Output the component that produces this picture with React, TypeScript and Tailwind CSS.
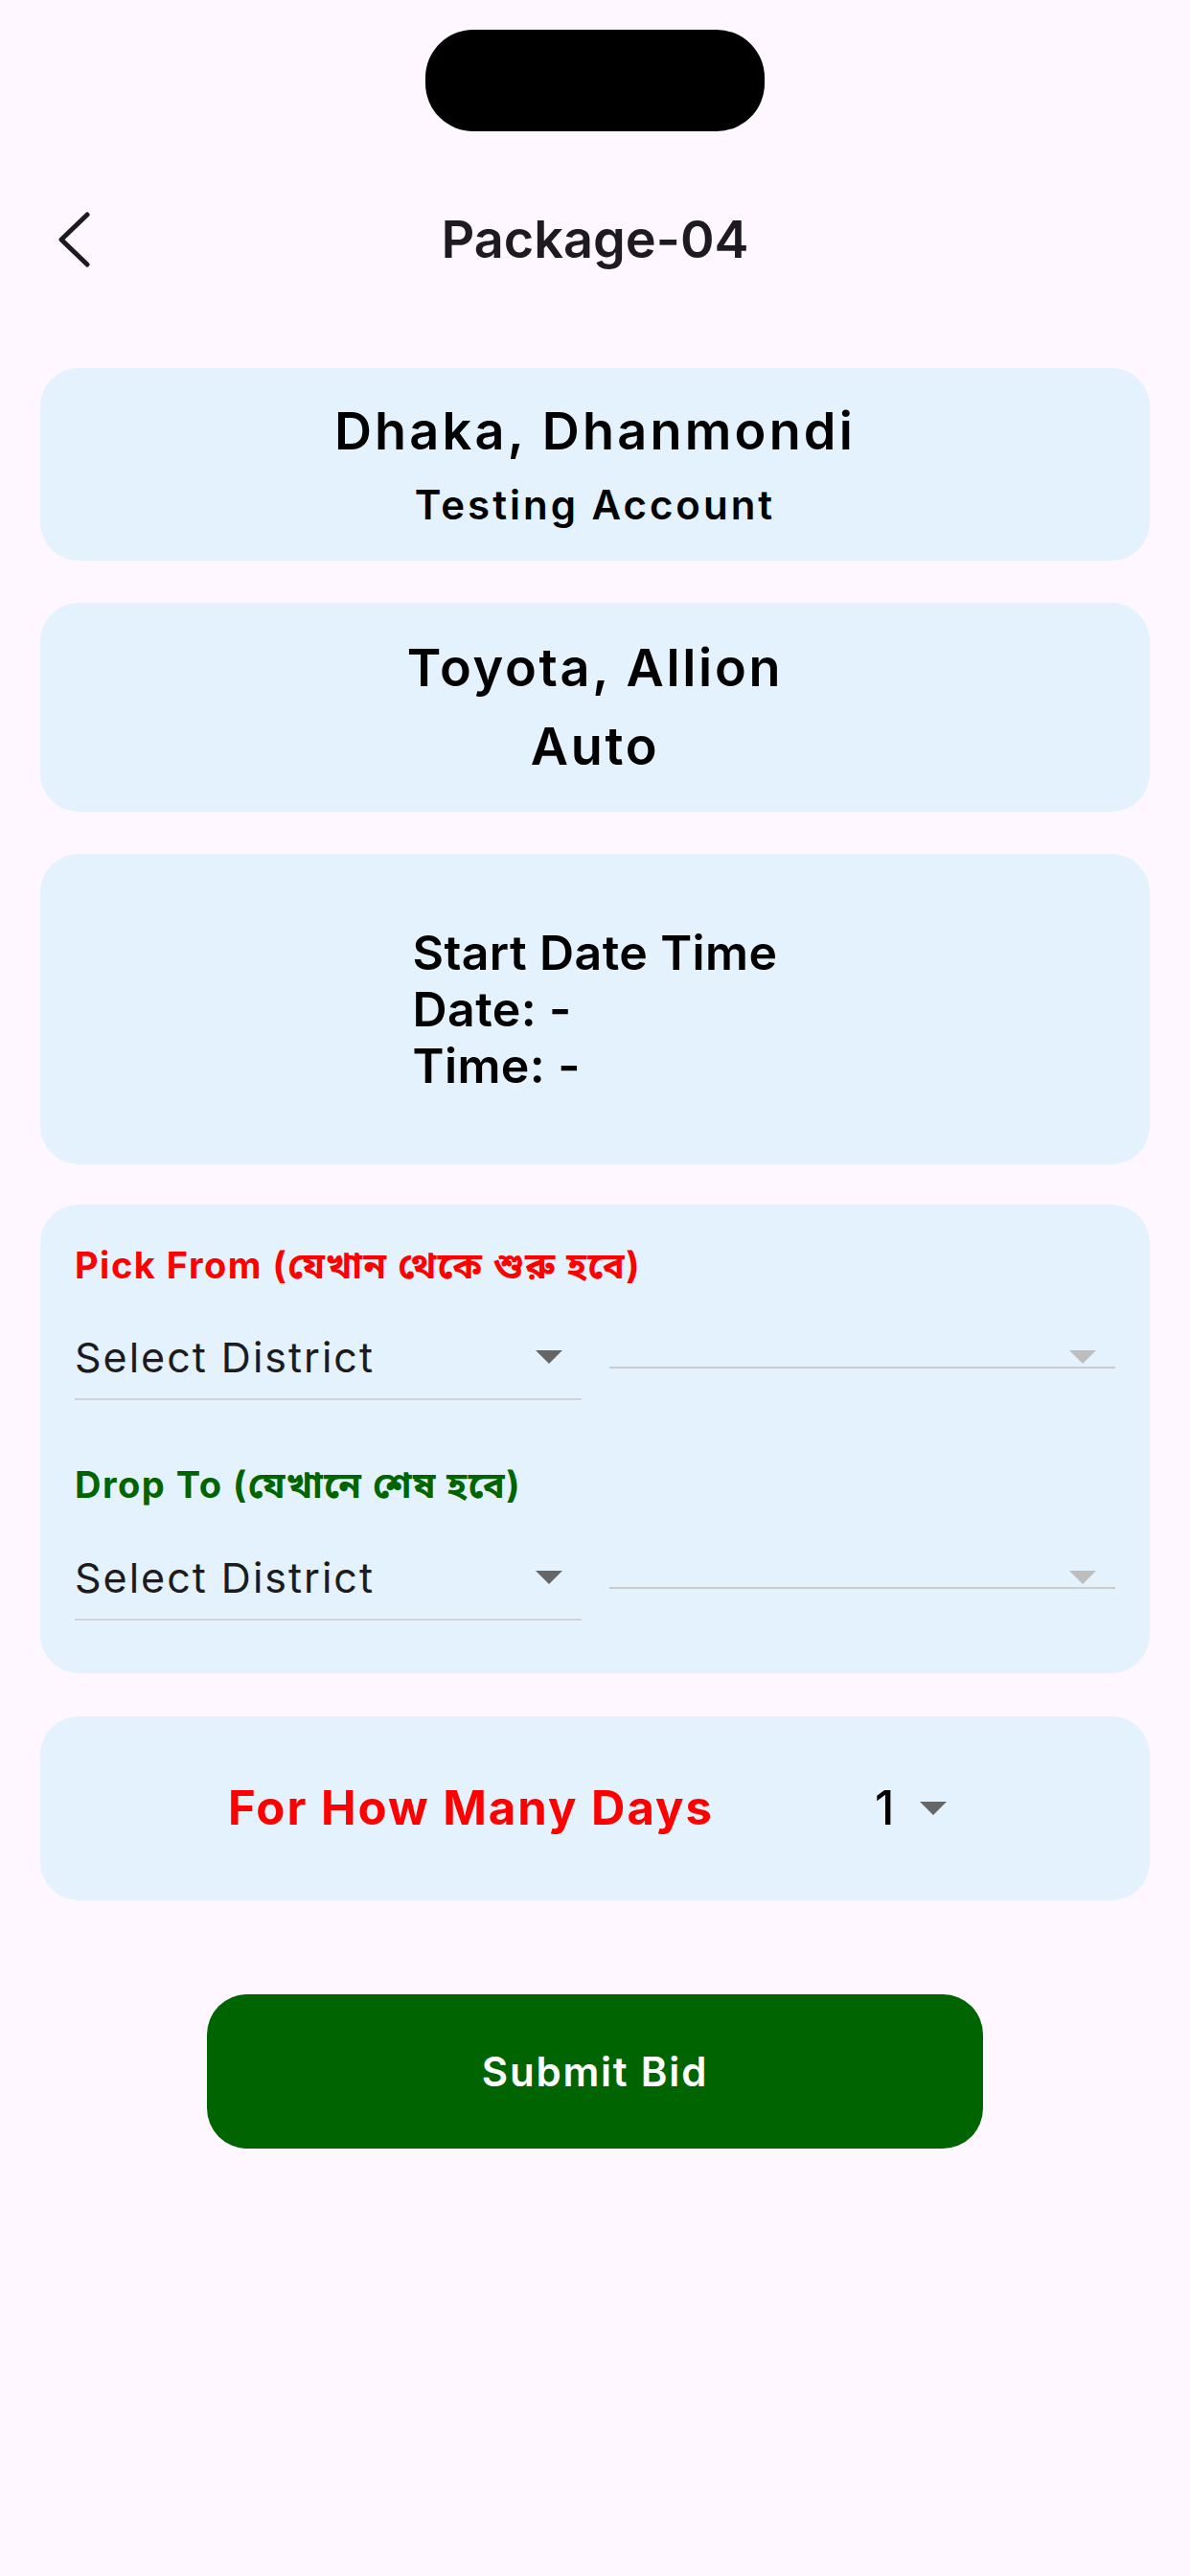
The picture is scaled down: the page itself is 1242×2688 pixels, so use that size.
import { useState } from 'react';

const sans = { fontFamily: 'Inter, "Noto Sans", "Noto Sans Bengali", "Lohit Bengali", FreeSans, sans-serif' };

function Caret({ color }: { color: string }) {
  return (
    <svg width="28" height="14" viewBox="0 0 28 14" className="shrink-0">
      <path d="M0 0 H28 L14 14 Z" fill={color} />
    </svg>
  );
}

function DistrictRow() {
  return (
    <div className="flex items-start gap-[29px]">
      {/* Main district dropdown */}
      <div className="flex-1 border-b-2 border-[#cfd2d6] pb-[15px]">
        <div className="flex h-[56px] items-center justify-between pr-[20px]">
          <span className="text-[43px] leading-[56px] tracking-[2px] text-[#1d1b20]">Select District</span>
          <Caret color="#666666" />
        </div>
      </div>
      {/* Area dropdown (empty) */}
      <div className="mt-[21px] flex-1 border-b-2 border-[#c9cccf] pb-[3px]">
        <div className="flex justify-end pr-[20px]">
          <Caret color="#bdbdbd" />
        </div>
      </div>
    </div>
  );
}

export default function App() {
  const [days] = useState(1);

  return (
    <div className="min-h-[2688px] w-full bg-[#fef7ff]" style={sans}>
      {/* Dynamic island */}
      <div className="flex justify-center pt-[31px]">
        <div className="h-[106px] w-[354px] rounded-[50px] bg-black" />
      </div>

      {/* Header */}
      <header className="mt-[80px] flex items-center px-[58px]">
        <button className="flex h-[62px] w-[40px] items-center">
          <svg width="40" height="62" viewBox="0 0 40 62">
            <path
              d="M33 5 L6 31 L33 57"
              fill="none"
              stroke="#1d1b20"
              strokeWidth="5"
              strokeLinecap="round"
              strokeLinejoin="round"
            />
          </svg>
        </button>
        <h1 className="flex-1 text-center text-[54px] font-semibold leading-[66px] text-[#1d1b20]">
          Package-04
        </h1>
        <div className="w-[40px]" />
      </header>

      <main className="mt-[101px] flex flex-col px-[42px]">
        {/* Location */}
        <section className="flex h-[201px] flex-col items-center justify-center gap-[20px] rounded-[40px] bg-[#e3f2fd] text-black">
          <p className="text-[54px] font-semibold leading-[64px] tracking-[3.2px]">Dhaka, Dhanmondi</p>
          <p className="text-[42px] font-semibold leading-[50px] tracking-[3px]">Testing Account</p>
        </section>

        {/* Car */}
        <section className="mt-[44px] flex h-[218px] flex-col items-center justify-center gap-[18px] rounded-[40px] bg-[#e3f2fd] text-black">
          <p className="text-[54px] font-semibold leading-[64px] tracking-[2.7px]">Toyota, Allion</p>
          <p className="text-[54px] font-semibold leading-[64px] tracking-[2.7px]">Auto</p>
        </section>

        {/* Start date time */}
        <section className="mt-[44px] flex h-[324px] items-center justify-center rounded-[40px] bg-[#e3f2fd] text-black">
          <div className="text-[50px] font-semibold leading-[59px] tracking-[0.4px]">
            <p>Start Date Time</p>
            <p>Date: -</p>
            <p>Time: -</p>
          </div>
        </section>

        {/* Pick / drop */}
        <section className="mt-[42px] rounded-[40px] bg-[#e3f2fd] px-[36px] pb-[55px] pt-[40px]">
          <p className="text-[38px] font-bold leading-[46px] tracking-[1.5px] text-[#ff0000]">
            Pick From (যেখান থেকে শুরু হবে)
          </p>
          <div className="mt-[45px]">
            <DistrictRow />
          </div>
          <p className="mt-[65px] text-[38px] font-bold leading-[46px] tracking-[1.5px] text-[#006400]">
            Drop To (যেখানে শেষ হবে)
          </p>
          <div className="mt-[46px]">
            <DistrictRow />
          </div>
        </section>

        {/* Days */}
        <section className="mt-[45px] flex h-[192px] items-center gap-[168px] rounded-[40px] bg-[#e3f2fd] pl-[196px]">
          <span className="text-[49px] font-bold tracking-[2px] text-[#ff0000]">For How Many Days</span>
          <div className="flex items-center gap-[27px]">
            <span className="text-[49px] font-medium text-black">{days}</span>
            <Caret color="#666666" />
          </div>
        </section>

        {/* Submit */}
        <div className="mt-[98px] flex justify-center">
          <button className="h-[161px] w-[810px] rounded-[42px] bg-[#006400] text-[42px] font-semibold tracking-[1.8px] text-white">
            Submit Bid
          </button>
        </div>
      </main>
    </div>
  );
}
